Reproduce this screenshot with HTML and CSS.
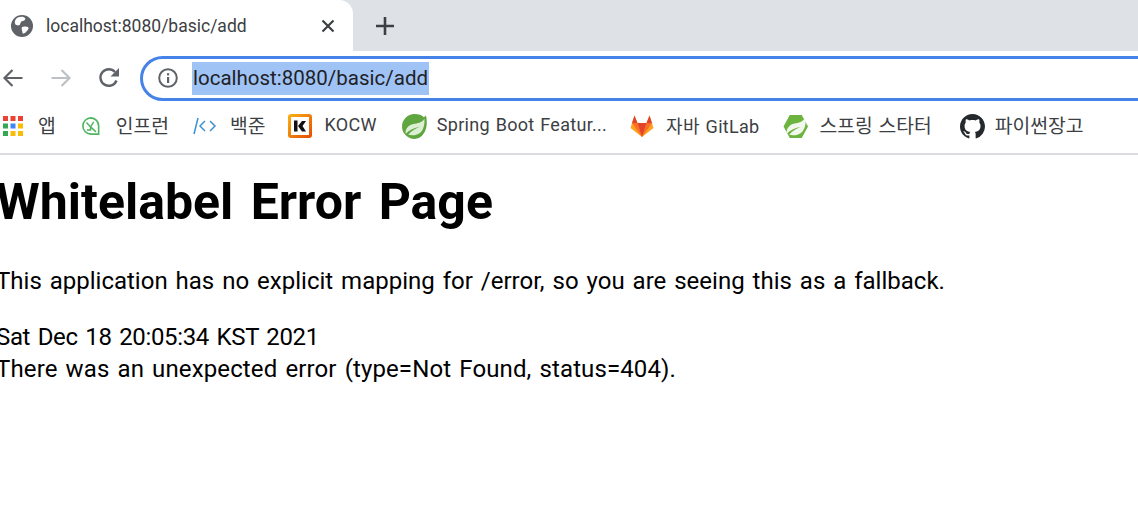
FILE: index.html
```html
<!DOCTYPE html>
<html lang="ko">
<head>
<meta charset="utf-8">
<title>Whitelabel Error Page</title>
<link rel="stylesheet" href="styles.css">
</head>
<body>
<header class="chrome">
  <div class="tabstrip">
    <div class="tab">
      <svg class="favicon" viewBox="0 0 22 22"><circle cx="11" cy="11" r="11" fill="#5f6368"/><path d="M5 4 C7 1.500 12 1 14 3 C15 4.500 13 6 11.500 6 C10 6 9.500 8 9 9.500 C8 11 5.500 10.500 4.500 9.500 C3.500 8 3.500 6 5 4 Z" fill="#fff"/><path d="M11 12 C13 11 16 11.500 17.500 12.500 C18 14 16 16 15 17 C13.500 18.500 12 19 11.500 18 C11.500 16 10 14 11 12 Z" fill="#fff"/></svg>
      <span class="tab-title">localhost:8080/basic/add</span>
      <svg class="tab-close" viewBox="0 0 14 14"><path d="M1.500 1.500 L12.500 12.500 M12.500 1.500 L1.500 12.500" stroke="#3c4043" stroke-width="2.2" fill="none"/></svg>
    </div>
    <svg class="new-tab" viewBox="0 0 18 18"><path d="M9 0 V18 M0 9 H18" stroke="#3c4043" stroke-width="2.6" fill="none"/></svg>
  </div>
  <div class="toolbar">
    <svg class="nav back" viewBox="0 0 20 20"><path d="M20 10 H2 M10 2 L2 10 L10 18" stroke="#5f6368" stroke-width="2.2" fill="none"/></svg>
    <svg class="nav forward" viewBox="0 0 20 20"><path d="M0 10 H18 M10 2 L18 10 L10 18" stroke="#bdc1c6" stroke-width="2.2" fill="none"/></svg>
    <svg class="nav reload" viewBox="0 0 22 22"><path d="M18.500 13.500 A8.300 8.300 0 1 1 17 5" stroke="#5f6368" stroke-width="2.4" fill="none"/><path d="M21 1 V9.500 H12.500 Z" fill="#5f6368"/></svg>
    <div class="omnibox">
      <svg class="info" viewBox="0 0 20 20"><circle cx="10" cy="10" r="8.800" stroke="#5f6368" stroke-width="2" fill="none"/><rect x="9" y="9" width="2.200" height="6" fill="#5f6368"/><rect x="9" y="5.200" width="2.200" height="2.200" fill="#5f6368"/></svg>
      <span class="url">localhost:8080/basic/add</span>
    </div>
  </div>
  <nav class="bookmarks">
    <a class="bm bm-apps">
      <svg class="bm-icon" viewBox="0 0 20 20">
        <rect x="0" y="0" width="5" height="5" fill="#ea4335"/><rect x="7.500" y="0" width="5" height="5" fill="#ea4335"/><rect x="15" y="0" width="5" height="5" fill="#ea4335"/>
        <rect x="0" y="7.500" width="5" height="5" fill="#34a853"/><rect x="7.500" y="7.500" width="5" height="5" fill="#4285f4"/><rect x="15" y="7.500" width="5" height="5" fill="#fbbc05"/>
        <rect x="0" y="15" width="5" height="5" fill="#34a853"/><rect x="7.500" y="15" width="5" height="5" fill="#fbbc05"/><rect x="15" y="15" width="5" height="5" fill="#fbbc05"/>
      </svg>
      <span class="ko">앱</span>
    </a>
    <a class="bm bm-inf">
      <svg class="bm-icon" viewBox="0 0 20 20"><path d="M10 1 A9 9 0 1 0 10 19 H18.500 V10 A9 9 0 0 0 10 1 Z" stroke="#4fb560" stroke-width="1.800" fill="#fff"/><path d="M5 6 L9.500 11 L15.500 16.500 M13 5.500 L9.500 11 V14.500 H5.500" stroke="#4fb560" stroke-width="1.600" fill="none"/></svg>
      <span class="ko">인프런</span>
    </a>
    <a class="bm bm-boj">
      <svg class="bm-icon" viewBox="0 0 24 18"><path d="M5 1 L1 17" stroke="#3f93d1" stroke-width="1.500" fill="none"/><path d="M12 4 L7 9 L12 14 M17 4 L22 9 L17 14" stroke="#3f93d1" stroke-width="1.500" fill="none"/></svg>
      <span class="ko">백준</span>
    </a>
    <a class="bm bm-kocw">
      <svg class="bm-icon" viewBox="0 0 24 24"><defs><linearGradient id="kg" x1="0" y1="0" x2="1" y2="1"><stop offset="0" stop-color="#fbb315"/><stop offset="1" stop-color="#e64a00"/></linearGradient></defs><rect width="24" height="24" rx="3" fill="url(#kg)"/><rect x="3" y="3" width="18" height="18" fill="#fff"/><path d="M6 6.500 H9.500 V17.500 H6 Z M10 12 L14 7 H18 L14.500 12 L18 17.500 H14 Z" fill="#111"/></svg>
      <span>KOCW</span>
    </a>
    <a class="bm bm-spring">
      <svg class="bm-icon" viewBox="0 0 24 24"><path d="M12 0 C16 0 19 1 21 3 L23 1.500 C24.500 7 24 14 21 18.500 C19 22 15.500 24 12 24 A12 12 0 0 1 12 0 Z" fill="#5fa641"/><path d="M3.500 19 C3 14 6 10.500 11 9.500 C15 8.800 19 8.500 21.500 4.500 C22 9 21 14 18.500 17 C15 20.500 10 21 6 20 C9 16 13 14 17 12.500 C12 13 7 15.500 3.500 19 Z" fill="#dcefd3"/></svg>
      <span>Spring Boot Featur...</span>
    </a>
    <a class="bm bm-gitlab">
      <svg class="bm-icon" viewBox="0 0 24 24"><path d="M12 23 L0.500 14 L2 9 L4.500 1.500 L7.500 9 H16.500 L19.500 1.500 L22 9 L23.500 14 Z" fill="#fca326"/><path d="M12 23 L2 9 H7.500 Z M12 23 L22 9 H16.500 Z" fill="#fc6d26"/><path d="M12 23 L7.500 9 H16.500 Z" fill="#e24329"/><path d="M4.500 1.500 L7.500 9 H2 Z M19.500 1.500 L16.500 9 H22 Z" fill="#e24329"/></svg>
      <span>자바 GitLab</span>
    </a>
    <a class="bm bm-starter">
      <svg class="bm-icon" viewBox="0 0 24 24"><path d="M6.500 1 H18 L24 12 L18 23 H6.500 L0.500 12 Z" fill="#6db33f"/><path d="M3.500 19 C3 14 6 10 11 9 C15 8.300 19 8 21.500 3 C22.500 9 21 14 18.500 17 C15 20.500 10 21 6 20 C9 16 13 14 17 12.500 C12 13 7 15.500 3.500 19 Z" fill="#f2f8ee"/></svg>
      <span class="ko">스프링 스타터</span>
    </a>
    <a class="bm bm-github">
      <svg class="bm-icon" viewBox="0 0 16 16"><path fill="#24292e" d="M8 0C3.580 0 0 3.580 0 8c0 3.540 2.290 6.530 5.470 7.590.4.07.55-.17.55-.38 0-.19-.01-.82-.01-1.490-2.010.37-2.530-.49-2.690-.94-.09-.23-.48-.94-.82-1.130-.28-.15-.68-.52-.01-.53.63-.01 1.080.58 1.230.82.72 1.210 1.870.87 2.330.66.07-.52.28-.87.51-1.070-1.780-.2-3.640-.89-3.640-3.950 0-.87.31-1.590.82-2.150-.08-.2-.36-1.020.08-2.120 0 0 .67-.21 2.200.82.64-.18 1.320-.27 2-.27.68 0 1.360.09 2 .27 1.530-1.040 2.200-.82 2.200-.82.44 1.100.16 1.920.08 2.120.51.56.82 1.270.82 2.150 0 3.070-1.870 3.750-3.650 3.950.29.25.54.73.54 1.480 0 1.070-.01 1.930-.01 2.200 0 .21.15.46.55.38A8.013 8.013 0 0016 8c0-4.420-3.580-8-8-8z"/></svg>
      <span class="ko">파이썬장고</span>
    </a>
  </nav>
</header>
<main class="page">
  <h1 class="title">Whitelabel Error Page</h1>
  <p class="lead">This application has no explicit mapping for /error, so you are seeing this as a fallback.</p>
  <div class="when">Sat Dec 18 20:05:34 KST 2021</div>
  <div class="what">There was an unexpected error (type=Not Found, status=404).</div>
</main>
</body>
</html>
```
FILE: styles.css
```css
html, body { margin: 0; padding: 0; overflow: hidden; background: #fff; }
body { font-family: Roboto, "Noto Sans CJK KR", sans-serif; color: #000; width: 1138px; height: 510px; }

.chrome { display: flex; flex-direction: column; }

.tabstrip { display: flex; align-items: center; height: 51px; background: #dee1e6; }
.tab { display: flex; align-items: center; width: 353px; height: 51px; box-sizing: border-box; padding-left: 11px; padding-right: 18px; background: #fff; border-top-right-radius: 14px; }
.favicon { width: 22px; height: 22px; flex: none; }
.tab-title { margin-left: 13px; flex: 1; font-size: 17.5px; color: #3c4043; white-space: nowrap; }
.tab-close { width: 14px; height: 14px; flex: none; }
.new-tab { width: 18px; height: 18px; margin-left: 23px; }

.toolbar { display: flex; align-items: center; height: 53px; background: #fff; padding-top: 1px; box-sizing: border-box; }
.nav { flex: none; }
.back { width: 21px; height: 20px; margin-left: 2px; }
.forward { width: 21px; height: 20px; margin-left: 28px; }
.reload { width: 22px; height: 22px; margin-left: 26px; }
.omnibox { display: flex; align-items: center; flex: none; width: 1040px; height: 45px; margin-left: 20px; box-sizing: border-box; border: 3px solid #4683e8; border-radius: 23px; }
.info { width: 20px; height: 20px; margin-left: 15px; flex: none; }
.url { margin-left: 14px; padding: 0 1px; font-size: 20.500px; line-height: 33px; color: #202124; background: #a0c3f5; white-space: nowrap; }

.bookmarks { display: flex; align-items: center; height: 51px; box-sizing: border-box; border-bottom: 2px solid #dadce0; padding-bottom: 5px; font-size: 18px; letter-spacing: .3px; color: #3c4043; white-space: nowrap; word-spacing: 1px; }
.bm { display: flex; align-items: center; flex: none; }
.bm span { display: block; padding-bottom: 3px; }
.bm .ko { font-size: 19.300px; letter-spacing: 0; }
.bm-icon { flex: none; }
.bm-apps { margin-left: 3px; }
.bm-apps .bm-icon { width: 20px; height: 20px; margin-right: 15px; }
.bm-inf { margin-left: 26px; }
.bm-inf .bm-icon { width: 18px; height: 18px; margin-right: 16px; }
.bm-boj { margin-left: 24px; }
.bm-boj .bm-icon { width: 24px; height: 18px; margin-right: 13px; }
.bm-kocw { margin-left: 23px; }
.bm-kocw .bm-icon { width: 24px; height: 24px; margin-right: 12px; }
.bm-spring { margin-left: 25px; }
.bm-spring .bm-icon { width: 25px; height: 25px; margin-right: 10px; }
.bm-gitlab { margin-left: 23px; }
.bm-gitlab .bm-icon { width: 24px; height: 24px; margin-right: 12px; }
.bm-starter { margin-left: 23px; }
.bm-starter .bm-icon { width: 25px; height: 25px; margin-right: 12px; }
.bm-github { margin-left: 28px; }
.bm-github .bm-icon { width: 25px; height: 25px; margin-right: 10px; }

.page { margin-left: -4px; }
.title { margin: 19px 0 0; font-size: 50px; line-height: 56px; font-weight: 700; white-space: nowrap; word-spacing: 5px; }
.lead { margin: 35px 0 0; font-size: 24px; line-height: 32px; white-space: nowrap; word-spacing: 2px; }
.when { margin-top: 24px; font-size: 24px; line-height: 32px; white-space: nowrap; word-spacing: 2px; letter-spacing: -.35px; }
.what { font-size: 24px; line-height: 32px; white-space: nowrap; word-spacing: 2px; letter-spacing: .12px; }
```
